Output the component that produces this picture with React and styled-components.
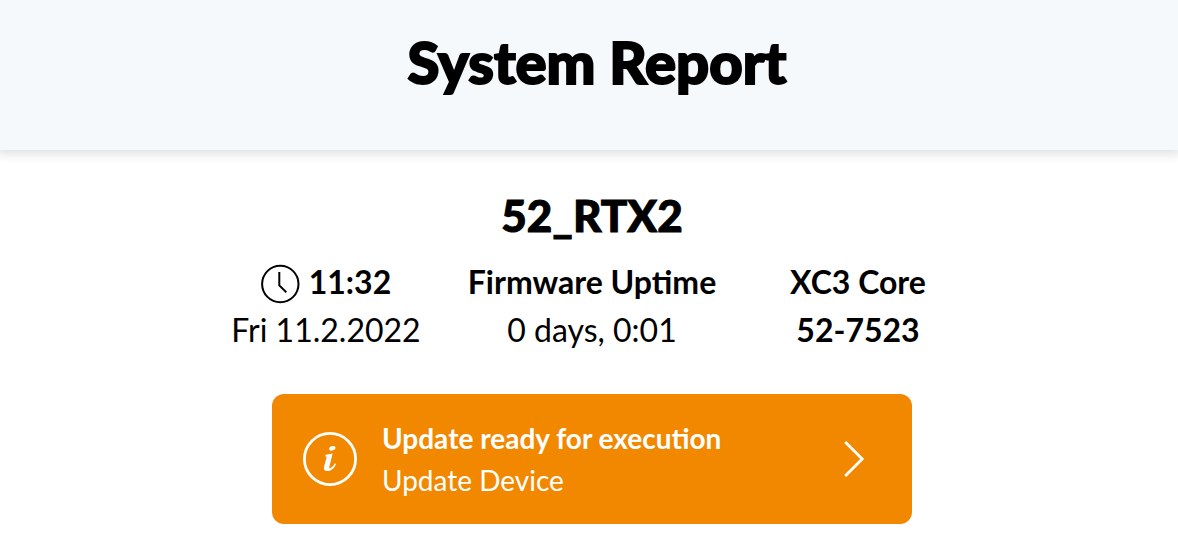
import React from 'react';
import styled, { createGlobalStyle } from 'styled-components';

const GlobalStyle = createGlobalStyle`
  * {
    box-sizing: border-box;
  }
  body {
    margin: 0;
    color: #000;
    background-color: #fff;
    font-family: Lato, 'Liberation Sans', sans-serif;
  }
`;

const Header = styled.header`
  display: flex;
  justify-content: center;
  padding: 26px 0 52px 16px;
  background-color: #f5f9fc;
  box-shadow: 0 0 10px 4px rgba(0, 0, 0, 0.12);
`;

const Title = styled.h1`
  margin: 0;
  font-size: 58px;
  font-weight: 900;
  line-height: 72px;
  -webkit-text-stroke: 2px #000;
`;

const Main = styled.main`
  display: flex;
  flex-direction: column;
  align-items: center;
  padding: 37px 0 28px 6px;
`;

const DeviceName = styled.h2`
  margin: 0;
  font-size: 44px;
  font-weight: 900;
  line-height: 56px;
  -webkit-text-stroke: 1px #000;
`;

const Info = styled.section`
  display: grid;
  grid-template-columns: repeat(3, 266px);
  justify-content: center;
  padding-top: 15px;
`;

const InfoColumn = styled.div`
  display: flex;
  flex-direction: column;
  align-items: center;
`;

const InfoLine = styled.div`
  display: flex;
  align-items: center;
  gap: 8px;
  font-size: 32px;
  font-weight: ${props => (props.$bold ? 700 : 400)};
  line-height: 48px;
  white-space: nowrap;
`;

const UpdateButton = styled.button`
  display: flex;
  align-items: center;
  gap: 24px;
  width: 640px;
  max-width: 100%;
  margin-top: 40px;
  padding: 23px 46px 23px 30px;
  border: none;
  border-radius: 12px;
  color: #fff;
  background-color: #f28800;
  font-family: inherit;
  font-size: 28px;
  line-height: 42px;
  text-align: left;
  cursor: pointer;
`;

const UpdateText = styled.span`
  display: flex;
  flex: 1;
  flex-direction: column;
`;

const ClockIcon = () => (
  <svg width="40" height="44" viewBox="0 0 40 44" fill="none" stroke="#000" strokeWidth="2" aria-hidden="true">
    <circle cx="19.3" cy="24" r="18.2" />
    <path d="M18.3 12v13.4l7 6.8" />
  </svg>
);

const InfoIcon = () => (
  <svg width="56" height="56" viewBox="0 0 56 56" fill="none" aria-hidden="true">
    <circle cx="28" cy="28" r="25.6" stroke="#fff" strokeWidth="2.8" />
    <ellipse cx="30.3" cy="17.3" rx="3.2" ry="2.1" transform="rotate(-20 30.3 17.3)" fill="#fff" />
    <path
      d="M23.8 23.8l6.8-1.2-3.2 13.2c-.4 2 .6 1.6 2 .6 1.4-1 2.6-2.4 3.2-4l1.3.4c-.8 3.8-4.6 7.3-8.4 7.3-3.3 0-4-2-3.4-4.6l2.4-9c.2-1-.5-1.4-1.6-1.2z"
      fill="#fff"
    />
  </svg>
);

const ChevronIcon = () => (
  <svg width="22" height="38" viewBox="0 0 22 38" fill="none" stroke="#fff" strokeWidth="2.8" aria-hidden="true">
    <path d="M1.2 2l17 17-17 17" />
  </svg>
);

const App = () => (
  <>
    <GlobalStyle />
    <Header>
      <Title>System Report</Title>
    </Header>
    <Main>
      <DeviceName>52_RTX2</DeviceName>
      <Info>
        <InfoColumn>
          <InfoLine $bold>
            <ClockIcon />
            <span>11:32</span>
          </InfoLine>
          <InfoLine>Fri 11.2.2022</InfoLine>
        </InfoColumn>
        <InfoColumn>
          <InfoLine $bold>Firmware Uptime</InfoLine>
          <InfoLine>0 days, 0:01</InfoLine>
        </InfoColumn>
        <InfoColumn>
          <InfoLine $bold>XC3 Core</InfoLine>
          <InfoLine $bold>52-7523</InfoLine>
        </InfoColumn>
      </Info>
      <UpdateButton type="button">
        <InfoIcon />
        <UpdateText>
          <b>Update ready for execution</b>
          <span>Update Device</span>
        </UpdateText>
        <ChevronIcon />
      </UpdateButton>
    </Main>
  </>
);

export default App;
